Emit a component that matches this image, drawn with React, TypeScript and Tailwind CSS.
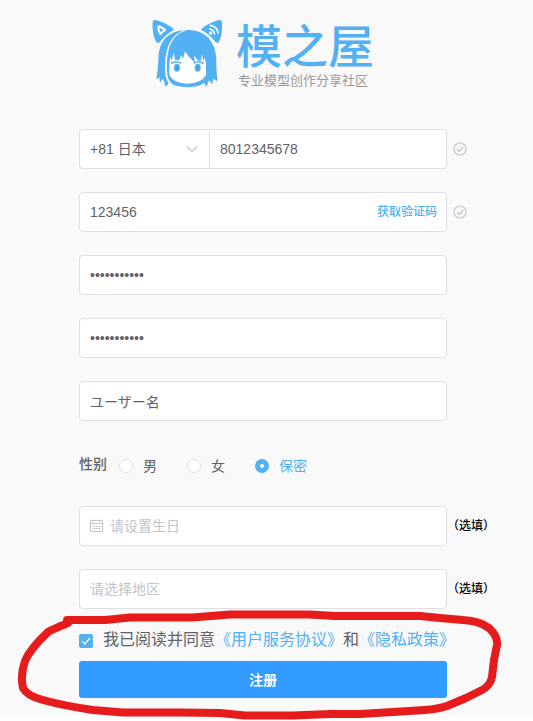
import type { ReactNode } from "react";

const field =
  "h-10 w-full min-w-0 rounded border border-[#dcdfe6] bg-white text-sm text-[#606266] outline-none placeholder:text-[#c0c4cc] placeholder:opacity-100";

function Mascot() {
  return (
    <svg className="h-[69px] w-[70px] shrink-0" viewBox="24 15 210 207" aria-hidden="true">
      <g fill="#52b0f3">
        <path d="M26 24Q27 13 38 16Q70 25 91 44Q66 56 47 82Q40 87 35 78Q24 54 26 24Z" />
        <path d="M234 24Q233 13 222 16Q190 25 170 44Q196 56 215 82Q221 87 226 78Q236 54 234 24Z" />
        <path d="M119 46Q76 48 56 80Q43 101 43 135Q42 166 37 194L46 186L48 203L57 191L65 215L74 206Q62 188 63 156Q63 98 86 70Q98 55 119 46Z" />
        <path d="M128 45Q88 58 75 99Q64 143 71 185Q77 204 91 211Q131 223 169 211L180 203L187 216L195 196L205 208L207 191L221 199Q216 166 217 136Q216 94 192 67Q166 43 128 45Z" />
      </g>
      <path
        d="M76 146L80 126L84 137L89 112L93 135H106L112 120L117 132L123 109Q134 128 153 143L150 122L163 137H170L174 118L178 138L182 128L186 146V180Q172 206 130 206Q89 206 76 180Z"
        fill="#fff"
      />
      <g fill="none" stroke="#fff">
        <path d="M43 34Q54 37 63 44Q56 50 49 57Q42 46 43 34Z" strokeWidth="6" strokeLinejoin="round" />
        <path d="M199 31Q219 34 222 53M197 42Q209 43 211 56" strokeWidth="5" strokeLinecap="round" />
      </g>
      <circle cx="200" cy="54" r="5" fill="#fff" />
      <g fill="#52b0f3">
        <ellipse cx="99" cy="158" rx="9" ry="12" />
        <ellipse cx="161" cy="158" rx="9" ry="12" />
      </g>
      <path d="M82 146Q94 135 111 145M149 145Q164 135 179 146" fill="none" stroke="#52b0f3" strokeWidth="5" />
      <g fill="#3d9fe8">
        <ellipse cx="99" cy="159" rx="4" ry="7" />
        <ellipse cx="161" cy="159" rx="4" ry="7" />
      </g>
    </svg>
  );
}

function Valid() {
  return (
    <svg className="ml-1.5 size-[14px]" viewBox="0 0 14 14" fill="none" stroke="#c0c4cc" aria-hidden="true">
      <circle cx="7" cy="7" r="6" strokeWidth="1.1" />
      <path d="M4 7.2 6.2 9.3 10.2 5" strokeWidth="1.2" />
    </svg>
  );
}

function Row({ children, extra }: { children: ReactNode; extra?: ReactNode }) {
  return (
    <div className="grid grid-cols-[minmax(0,1fr)_86px] items-center">
      {children}
      <div>{extra}</div>
    </div>
  );
}

function Optional() {
  return <span className="block whitespace-nowrap text-xs font-medium text-black">（选填）</span>;
}

function Gender({ label, checked }: { label: string; checked?: boolean }) {
  return (
    <label className="flex items-center gap-2.5 text-[#606266] has-checked:text-[#52b0f3]">
      <input
        type="radio"
        name="gender"
        defaultChecked={checked}
        className="size-3.5 appearance-none rounded-full border border-[#dcdfe6] bg-white checked:border-5 checked:border-[#52b0f3]"
      />
      {label}
    </label>
  );
}

export default function App() {
  return (
    <div className="relative pb-1.5 font-['Liberation_Sans','Noto_Sans_CJK_SC',sans-serif]">
      <main className="bg-[#f9f9f9] pt-5 pb-[17px] pl-[79px] text-sm">
        <header className="mr-[86px] flex justify-center gap-3.5">
          <Mascot />
          <div className="flex flex-col">
            <h1 className="pt-0.5 text-[46px] leading-[51px] font-medium whitespace-nowrap text-[#52b0f3]">模之屋</h1>
            <p className="pl-0.5 text-[13px] leading-4 whitespace-nowrap text-[#999]">专业模型创作分享社区</p>
          </div>
        </header>

        <form className="mt-10" onSubmit={(e) => e.preventDefault()}>
          <div className="flex flex-col gap-[23px]">
            <Row extra={<Valid />}>
              <div className="flex">
                <div className="grid w-[131px] shrink-0 items-center">
                  <select
                    aria-label="国家/地区"
                    className={`${field} col-start-1 row-start-1 appearance-none rounded-r-none pl-2.5`}
                  >
                    <option>+81 日本</option>
                  </select>
                  <svg
                    className="pointer-events-none col-start-1 row-start-1 mr-3 h-2 w-3 justify-self-end"
                    viewBox="0 0 12 8"
                    fill="none"
                    stroke="#c0c4cc"
                    strokeWidth="1.2"
                  >
                    <path d="M1 1.5 6 6.5 11 1.5" />
                  </svg>
                </div>
                <input
                  aria-label="手机号"
                  type="tel"
                  defaultValue="8012345678"
                  className={`${field} rounded-l-none border-l-0 px-2.5`}
                />
              </div>
            </Row>
            <Row extra={<Valid />}>
              <div className="flex h-10 items-center rounded border border-[#dcdfe6] bg-white pr-[9px]">
                <input
                  aria-label="验证码"
                  defaultValue="123456"
                  className="w-full min-w-0 bg-transparent pl-2.5 text-[#606266] outline-none"
                />
                <button type="button" className="shrink-0 text-xs font-medium text-[#52b0f3]">
                  获取验证码
                </button>
              </div>
            </Row>
            <Row>
              <input aria-label="密码" type="password" defaultValue="password123" className={`${field} px-2.5`} />
            </Row>
            <Row>
              <input aria-label="确认密码" type="password" defaultValue="password123" className={`${field} px-2.5`} />
            </Row>
            <Row>
              <input aria-label="用户名" defaultValue="ユーザー名" className={`${field} px-2.5`} />
            </Row>
            <fieldset aria-label="性别" className="flex h-[39px] items-center gap-3 pt-2">
              <span className="font-medium text-[#606266]">性别</span>
              <div className="flex gap-[30px] pt-1">
                <Gender label="男" />
                <Gender label="女" />
                <Gender label="保密" checked />
              </div>
            </fieldset>
            <Row extra={<Optional />}>
              <div className="flex h-10 items-center gap-1.5 rounded border border-[#dcdfe6] bg-white px-2.5">
                <svg className="size-3.5 shrink-0" viewBox="0 0 14 14" fill="none" stroke="#c0c4cc" aria-hidden="true">
                  <path d="M.5 1.5H12.5V12.5H.5ZM.5 4.5H12.5M3.5 .5V3M9.5 .5V3" />
                  <path d="M3 7.5H10.5M3 9.5H10.5" strokeDasharray="2 .75" />
                </svg>
                <input
                  aria-label="生日"
                  placeholder="请设置生日"
                  className="w-full min-w-0 text-[#606266] outline-none placeholder:text-[#c0c4cc]"
                />
              </div>
            </Row>
            <Row extra={<Optional />}>
              <input aria-label="地区" placeholder="请选择地区" className={`${field} px-2.5`} />
            </Row>
          </div>

          <div className="mt-[19px] flex h-6 items-center whitespace-nowrap text-base text-[#606266]">
            <span className="mt-0.5 mr-2.5 grid size-3.5 items-center">
              <input
                id="agree"
                type="checkbox"
                defaultChecked
                className="col-start-1 row-start-1 size-3.5 appearance-none rounded-xs border border-[#dcdfe6] bg-white checked:border-[#52b0f3] checked:bg-[#52b0f3]"
              />
              <svg
                className="pointer-events-none col-start-1 row-start-1 size-3.5"
                viewBox="0 0 14 14"
                fill="none"
                stroke="white"
                strokeWidth="1.2"
              >
                <path d="M3 7.2 5.8 10 11 4" />
              </svg>
            </span>
            <label htmlFor="agree">我已阅读并同意</label>
            <a href="#terms" className="text-[#52b0f3]">《用户服务协议》</a>
            <span>和</span>
            <a href="#privacy" className="text-[#52b0f3]">《隐私政策》</a>
          </div>
          <button
            type="submit"
            className="mt-[9px] block h-[37px] w-[calc(100%-86px)] rounded-[3px] bg-[#329bff] font-bold text-white"
          >
            注册
          </button>
        </form>
      </main>

      <svg
        className="pointer-events-none absolute bottom-0 left-0 h-[121px] w-[533px]"
        viewBox="0 600 533 121"
        fill="none"
        stroke="#e61b1b"
        strokeWidth="8"
        strokeLinecap="round"
        strokeLinejoin="round"
        aria-hidden="true"
      >
        <path d="M67 620H105L130 617.5H192L230 614.5H310L335 616H420L440 618L463 620Q480 621 489 628Q498 636 497 645L494 660L492 677Q490 686 482 690L466 698L447 706Q438 709 425 710L393 712L360 714H330L293 715.5H245L220 713L180 712.5H123L93 710Q65 706 43 700Q27 696 23 688Q20 675 25 661Q30 649 48 632Q51 630 68 623" />
      </svg>
    </div>
  );
}
